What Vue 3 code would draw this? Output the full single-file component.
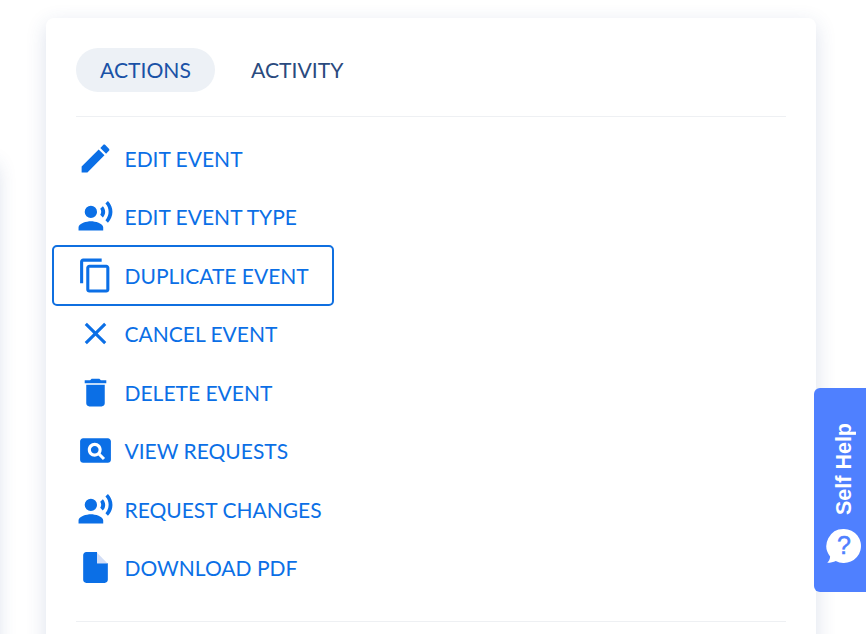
<script setup>
import { ref } from 'vue'

const voice = 'M9 5a4 4 0 1 0 0 8 4 4 0 0 0 0-8zM9 15c-2.67 0-8 1.34-8 4v2h16v-2c0-2.66-5.33-4-8-4zm7.76-9.64l-1.68 1.69c.84 1.18.84 2.71 0 3.89l1.68 1.69c2.02-2.02 2.02-5.07 0-7.27zM20.07 2l-1.63 1.63c2.77 3.02 2.77 7.56 0 10.74L20.07 16c3.9-3.89 3.91-9.95 0-14z'

const actions = ref([
  { label: 'EDIT EVENT', icon: 'M3 17.25V21h3.75L17.81 9.94l-3.75-3.75L3 17.25zM20.71 7.04c.39-.39.39-1.02 0-1.41l-2.34-2.34c-.39-.39-1.02-.39-1.41 0l-1.83 1.83 3.75 3.75 1.83-1.83z' },
  { label: 'EDIT EVENT TYPE', icon: voice },
  { label: 'DUPLICATE EVENT', focused: true, icon: 'M16 1H4c-1.1 0-2 .9-2 2v14h2V3h12V1zm3 4H8c-1.1 0-2 .9-2 2v14c0 1.1.9 2 2 2h11c1.1 0 2-.9 2-2V7c0-1.1-.9-2-2-2zm0 16H8V7h11v14z' },
  { label: 'CANCEL EVENT', icon: 'M19 6.41L17.59 5 12 10.59 6.41 5 5 6.41 10.59 12 5 17.59 6.41 19 12 13.41 17.59 19 19 17.59 13.41 12z' },
  { label: 'DELETE EVENT', icon: 'M6 19c0 1.1.9 2 2 2h8c1.1 0 2-.9 2-2V7H6v12zM19 4h-3.5l-1-1h-5l-1 1H5v2h14V4z' },
  { label: 'VIEW REQUESTS', icon: 'M11.5 9C10.12 9 9 10.12 9 11.5s1.12 2.5 2.5 2.5 2.5-1.12 2.5-2.5S12.88 9 11.5 9zM20 4H4c-1.1 0-2 .9-2 2v12c0 1.1.9 2 2 2h16c1.1 0 2-.9 2-2V6c0-1.1-.9-2-2-2zm-3.21 14.21l-2.91-2.91c-.69.44-1.51.7-2.38.7C9.01 16 7 13.99 7 11.5S9.01 7 11.5 7 16 9.01 16 11.5c0 .88-.26 1.69-.7 2.39l2.91 2.9-1.42 1.42z' },
  { label: 'REQUEST CHANGES', icon: voice },
  { label: 'DOWNLOAD PDF', notch: true, icon: 'M6 2c-1.1 0-1.99.9-1.99 2L4 20c0 1.1.89 2 1.99 2H18c1.1 0 2-.9 2-2V9.200h-7V2H6z' }
])
</script>

<template>
  <div class="page">
    <aside class="side-card"></aside>

    <section class="card">
      <div class="tabs">
        <button class="tab active">ACTIONS</button>
        <button class="tab">ACTIVITY</button>
      </div>

      <ul class="action-list">
        <li v-for="a in actions" :key="a.label">
          <a class="action" :class="{ focused: a.focused }" href="#">
            <svg class="icon" viewBox="0 0 24 24" width="37" height="37">
              <path :d="a.icon" fill="currentColor" />
              <path v-if="a.notch" d="M13 2.500L19.700 9.200H13z" fill="#d3def6" />
            </svg>
            <span>{{ a.label }}</span>
          </a>
        </li>
      </ul>
    </section>

    <div class="self-help">
      <span class="help-text">Self Help</span>
      <svg class="bubble" viewBox="0 0 36 36" width="36" height="36">
        <path d="M18 1a17 17 0 1 1-8.200 31.900C7.500 34 4 34.800 1.300 34.700c1.500-1.200 2.700-3.400 2.800-6.200A17 17 0 0 1 18 1z" fill="#fff" />
        <text x="18" y="26" text-anchor="middle" class="qmark">?</text>
      </svg>
    </div>
  </div>
</template>

<style scoped>
.page {
  position: relative;
  display: flex;
  height: 634px;
  overflow: hidden;
  padding-top: 18px;
  box-sizing: border-box;
  background: #fff;
  font-family: Lato, "Liberation Sans", sans-serif;
}
.side-card {
  flex: none;
  width: 200px;
  height: 600px;
  margin: 140px 0 0 -204px;
  background: #fff;
  border-radius: 8px;
  box-shadow: 0 6px 20px rgba(50, 80, 140, 0.22);
}
.card {
  flex: none;
  width: 770px;
  height: 700px;
  margin-left: 50px;
  padding: 30px;
  box-sizing: border-box;
  background: #fff;
  border-radius: 8px;
  box-shadow: 0 6px 20px rgba(50, 80, 140, 0.17);
}
.tabs {
  display: flex;
  gap: 12px;
  padding-bottom: 24px;
  border-bottom: 1px solid #eef0f3;
}
.tab {
  height: 44px;
  padding: 0 24px;
  border: none;
  border-radius: 22px;
  background: none;
  color: #2a4a7e;
  font: 400 21.15px Lato, "Liberation Sans", sans-serif;
}
.tab.active {
  background: #edf1f6;
  color: #1a52a6;
}
.action-list {
  list-style: none;
  margin: 12px 0 0 -23px;
  padding: 0;
}
.action-list li {
  display: flex;
  height: 58.5px;
}
.action-list::after {
  content: "";
  display: block;
  height: 24px;
  margin-left: 23px;
  border-bottom: 1px solid #eef0f3;
}
.action {
  display: inline-flex;
  align-items: center;
  gap: 11px;
  height: 58.5px;
  padding: 0 24px 0 23.5px;
  border-radius: 4px;
  color: #0b6fe6;
  font-size: 21px;
  text-decoration: none;
}
.action.focused {
  outline: 2px solid #0f6fe0;
  outline-offset: -1px;
}
.icon {
  flex: none;
}
.self-help {
  position: absolute;
  top: 388px;
  right: 0;
  display: flex;
  flex-direction: column;
  align-items: center;
  width: 52px;
  height: 204px;
  padding: 35px 0 0 8px;
  box-sizing: border-box;
  background: #4f80ff;
  border-radius: 6px 0 0 6px;
  color: #fff;
}
.help-text {
  writing-mode: vertical-rl;
  transform: rotate(180deg);
  font: 700 21.5px/24px "Liberation Sans", Arial, sans-serif;
}
.bubble {
  margin-top: 13px;
}
.qmark {
  fill: #4f80ff;
  stroke: #4f80ff;
  stroke-width: 0.5;
  font: 400 25px "Liberation Sans", Arial, sans-serif;
}
</style>
